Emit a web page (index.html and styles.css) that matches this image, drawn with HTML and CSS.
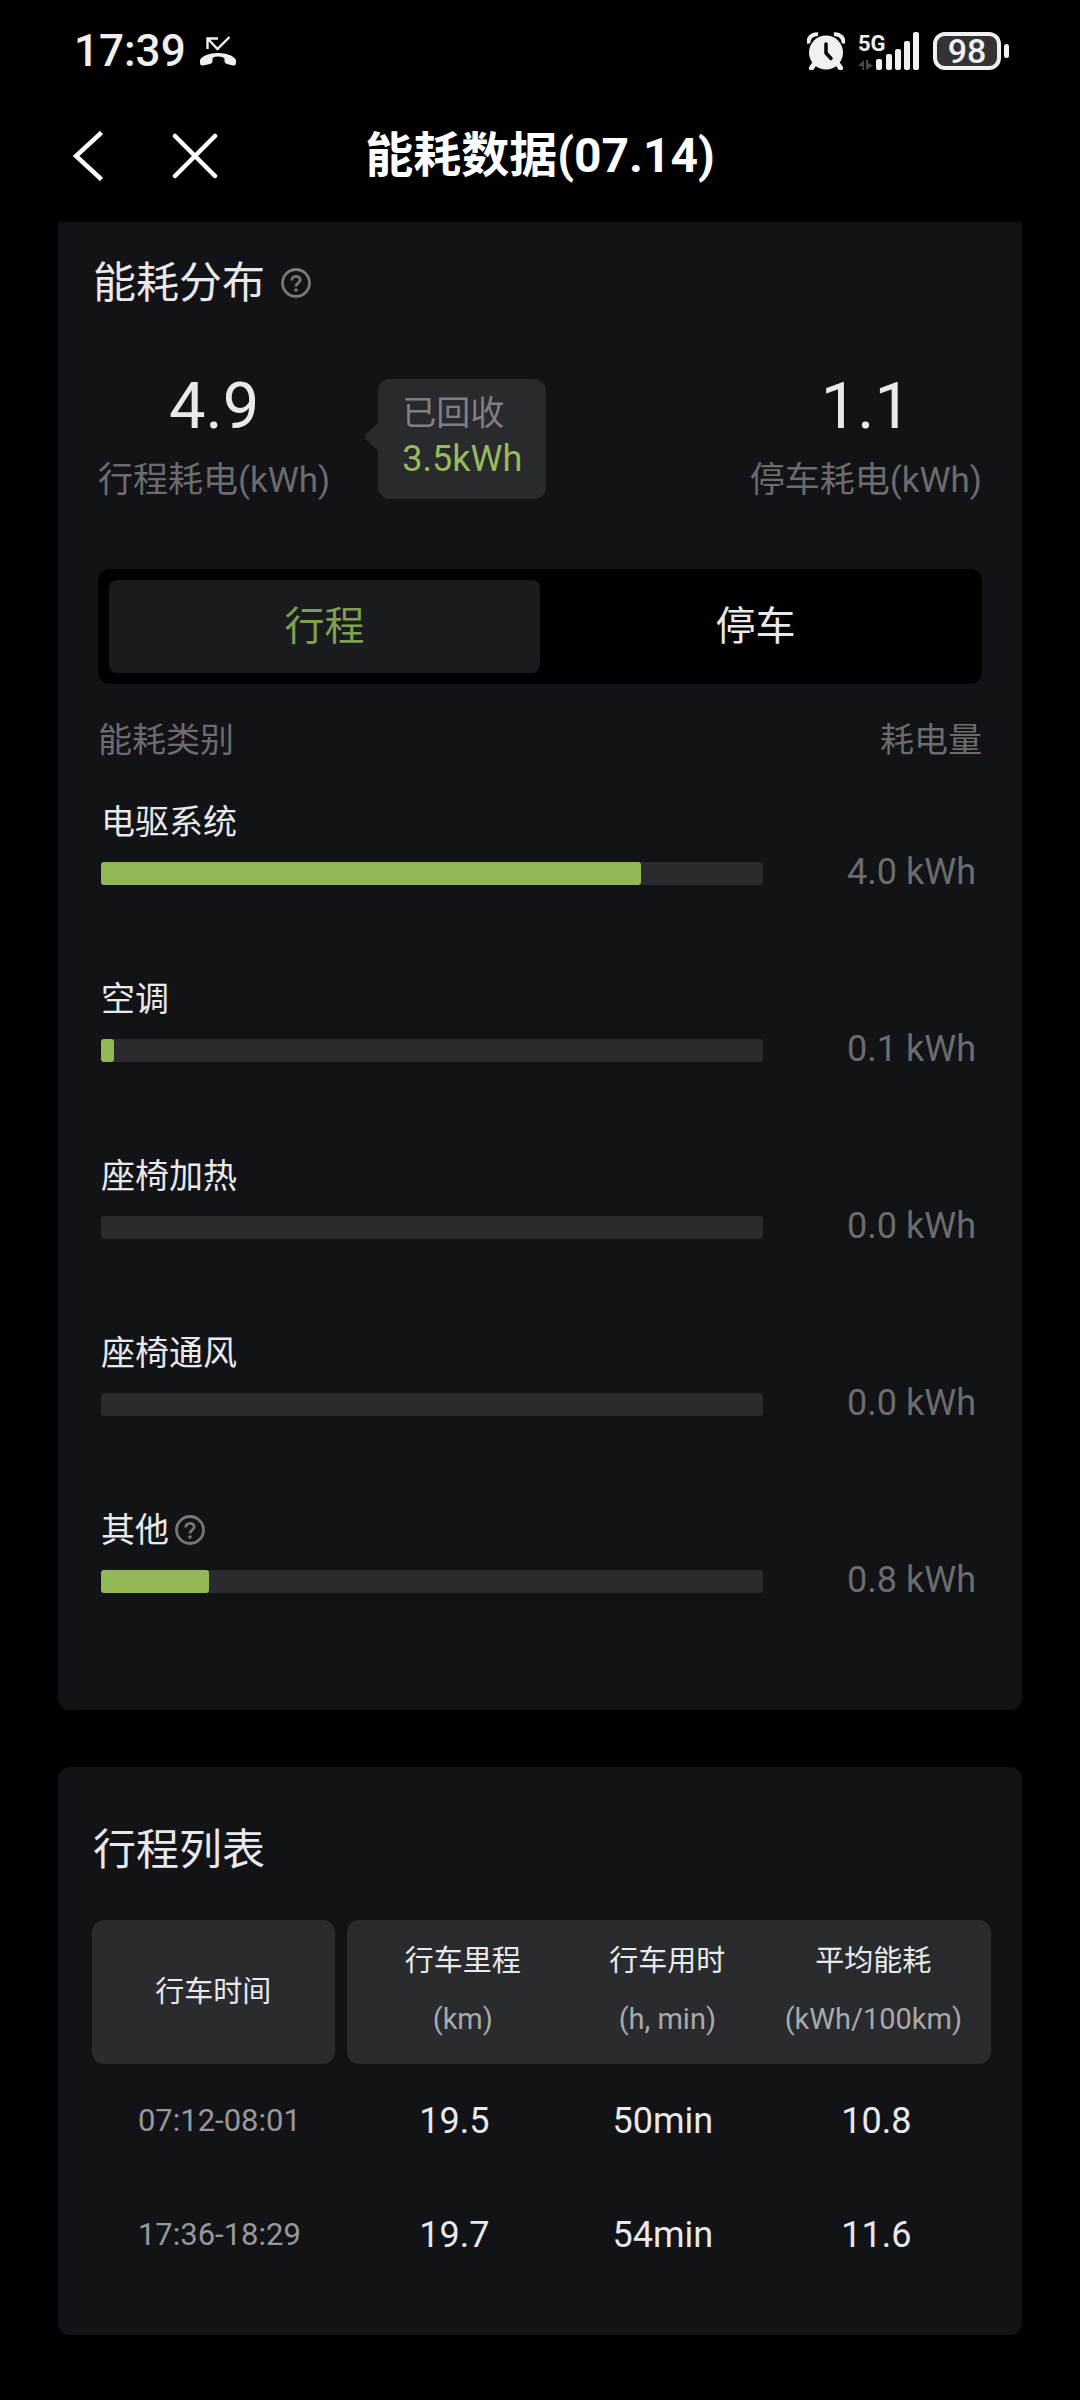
FILE: index.html
```html
<!DOCTYPE html>
<html lang="zh-CN">
<head>
<meta charset="utf-8">
<meta name="viewport" content="width=device-width, initial-scale=1">
<title>能耗数据(07.14)</title>
<link rel="stylesheet" href="styles.css">
</head>
<body>
<div class="status-bar">
  <div class="status-left">
    <span class="clock">17:39</span>
    <svg class="missed-call" width="38" height="32" viewBox="0 0 38 32" aria-hidden="true">
      <path d="M8.500 14V3.500H19M8.500 3.500L18.500 14L30.500 2" fill="none" stroke="currentColor" stroke-width="2.400"/>
      <path d="M1 25C3 21 10 18 19 18S35 21 37 25V28Q37 31 34 30.500L28 29Q25.500 28.500 25.500 26V23.500Q24 21.500 19 21.500T13.500 23.500V26Q13.500 28.500 11 29L4 30.500Q1 31 1 28Z" fill="currentColor"/>
    </svg>
  </div>
  <div class="status-right">
    <svg width="38" height="38" viewBox="0 0 38 38" aria-hidden="true">
      <path d="M1.500 11.500A8 8 0 0 1 11 2.500M27 2.500A8 8 0 0 1 36.500 11.500" fill="none" stroke="currentColor" stroke-width="4"/>
      <path d="M8 31L4.500 36M30 31L33.500 36" stroke="currentColor" stroke-width="5" stroke-linecap="round"/>
      <circle cx="19" cy="20.500" r="17" fill="currentColor"/>
      <path d="M19 12V21L24 26.500" fill="none" stroke="#000" stroke-width="3.500" stroke-linecap="round" stroke-linejoin="round"/>
    </svg>
    <svg class="signal" width="62" height="38" viewBox="0 0 62 38" aria-hidden="true">
      <text class="network" x="0" y="19">5G</text>
      <path d="M0 34L6 28V38H4.500V34ZM8 28V38L15 33.500L10 31V28Z" fill="#4a4a4a"/>
      <g fill="currentColor">
        <rect x="18" y="27" width="6" height="11" rx="2"/>
        <rect x="28" y="22" width="6" height="16" rx="2"/>
        <rect x="37" y="17" width="6" height="21" rx="2"/>
        <rect x="46" y="9" width="6" height="29" rx="2"/>
        <rect x="55" y="0" width="6" height="38" rx="2"/>
      </g>
    </svg>
    <div class="battery"><span class="battery-level">98</span></div>
  </div>
</div>

<header class="nav-bar">
  <div class="nav-actions">
    <button class="nav-button" type="button" aria-label="返回">
      <svg width="32" height="50" viewBox="0 0 32 50"><path d="M29.500 1.500L4 25L29.500 48.500" fill="none" stroke="currentColor" stroke-width="4.500"/></svg>
    </button>
    <button class="nav-button" type="button" aria-label="关闭">
      <svg width="46" height="46" viewBox="0 0 46 46"><path d="M3 3L43 43M43 3L3 43" stroke="currentColor" stroke-width="4.500" stroke-linecap="round"/></svg>
    </button>
  </div>
  <h1 class="nav-title">能耗数据(07.14)</h1>
</header>

<main class="content">
  <section class="card usage">
    <h2 class="card-title">能耗分布
      <button class="help" type="button" aria-label="能耗分布说明">
        <svg width="30" height="30" viewBox="0 0 30 30"><circle cx="15" cy="15" r="13.500" fill="none" stroke="currentColor" stroke-width="2.800"/><path d="M10.800 12.500C10.800 7 19.200 7 19.200 12C19.200 15 15 15 15 18.500" fill="none" stroke="currentColor" stroke-width="2.800"/><circle cx="15" cy="22" r="1.800" fill="currentColor"/></svg>
      </button>
    </h2>

    <div class="stats">
      <div class="stat">
        <span class="stat-value">4.9</span>
        <span class="stat-label">行程耗电(kWh)</span>
      </div>
      <div class="recovered">
        <span class="recovered-label">已回收</span>
        <span class="recovered-value">3.5kWh</span>
      </div>
      <div class="stat stat-end">
        <span class="stat-value">1.1</span>
        <span class="stat-label">停车耗电(kWh)</span>
      </div>
    </div>

    <div class="tabs" role="tablist">
      <button class="tab tab-active" type="button" role="tab" aria-selected="true">行程</button>
      <button class="tab" type="button" role="tab" aria-selected="false">停车</button>
    </div>

    <div class="columns">
      <span>能耗类别</span>
      <span>耗电量</span>
    </div>

    <ul class="categories">
      <li>
        <div class="category-name">电驱系统</div>
        <div class="category-row">
          <div class="track"><div class="fill" style="width:81.6%"></div></div>
          <span class="category-value">4.0 kWh</span>
        </div>
      </li>
      <li>
        <div class="category-name">空调</div>
        <div class="category-row">
          <div class="track"><div class="fill" style="width:2%"></div></div>
          <span class="category-value">0.1 kWh</span>
        </div>
      </li>
      <li>
        <div class="category-name">座椅加热</div>
        <div class="category-row">
          <div class="track"></div>
          <span class="category-value">0.0 kWh</span>
        </div>
      </li>
      <li>
        <div class="category-name">座椅通风</div>
        <div class="category-row">
          <div class="track"></div>
          <span class="category-value">0.0 kWh</span>
        </div>
      </li>
      <li>
        <div class="category-name">其他
          <button class="help" type="button" aria-label="其他说明">
            <svg width="30" height="30" viewBox="0 0 30 30"><circle cx="15" cy="15" r="13.500" fill="none" stroke="currentColor" stroke-width="2.800"/><path d="M10.800 12.500C10.800 7 19.200 7 19.200 12C19.200 15 15 15 15 18.500" fill="none" stroke="currentColor" stroke-width="2.800"/><circle cx="15" cy="22" r="1.800" fill="currentColor"/></svg>
          </button>
        </div>
        <div class="category-row">
          <div class="track"><div class="fill" style="width:16.3%"></div></div>
          <span class="category-value">0.8 kWh</span>
        </div>
      </li>
    </ul>
  </section>

  <section class="card trips">
    <h2 class="card-title">行程列表</h2>
    <table class="trip-table">
      <colgroup><col class="col-time"><col class="col-distance"><col class="col-duration"><col class="col-average"></colgroup>
      <thead>
        <tr>
          <th class="head-time" scope="col">行车时间</th>
          <th class="head-distance" scope="col">行车里程<span class="unit">(km)</span></th>
          <th scope="col">行车用时<span class="unit">(h, min)</span></th>
          <th class="head-average" scope="col">平均能耗<span class="unit">(kWh/100km)</span></th>
        </tr>
      </thead>
      <tbody>
        <tr><td class="trip-time">07:12-08:01</td><td class="trip-distance">19.5</td><td>50min</td><td>10.8</td></tr>
        <tr><td class="trip-time">17:36-18:29</td><td class="trip-distance">19.7</td><td>54min</td><td>11.6</td></tr>
      </tbody>
    </table>
  </section>
</main>
</body>
</html>
```
FILE: styles.css
```css
* {
  box-sizing: border-box;
}

body {
  margin: 0;
  background: #000;
  color: #e9e9eb;
  font-family: Roboto, "Noto Sans CJK SC", sans-serif;
  font-size: 34px;
  line-height: 48px;
}

button {
  padding: 0;
  border: 0;
  background: none;
  color: inherit;
  font: inherit;
}

svg {
  display: block;
}

h1,
h2,
ul {
  margin: 0;
  padding: 0;
}

/* Status bar */
.status-bar {
  display: flex;
  justify-content: space-between;
  align-items: center;
  height: 96px;
  padding: 6px 79px 0 74px;
  color: #f0f0f0;
}

.status-left,
.status-right {
  display: flex;
  align-items: center;
  gap: 13px;
}

.clock {
  font-size: 44px;
  font-weight: 500;
}

.signal {
  overflow: visible;
}

.network {
  fill: currentColor;
  font-size: 22px;
  font-weight: 700;
}

.battery {
  position: relative;
  width: 68px;
  height: 38px;
  border: 4px solid #f0f0f0;
  border-radius: 12px;
  background: #333;
  text-align: center;
}

.battery::after {
  content: "";
  position: absolute;
  top: 8px;
  right: -12px;
  width: 5px;
  height: 14px;
  border-radius: 3px;
  background: #f0f0f0;
}

.battery-level {
  display: block;
  font-size: 34px;
  font-weight: 500;
  line-height: 30px;
}

/* Navigation */
.nav-bar {
  display: grid;
  grid-template-columns: 1fr auto 1fr;
  align-items: center;
  height: 126px;
  padding: 0 72px 7px;
  color: #fff;
}

.nav-actions {
  display: flex;
  align-items: center;
  gap: 68px;
}

.nav-title {
  font-size: 48px;
  font-weight: 700;
  line-height: 72px;
}

/* Cards */
.content {
  display: flex;
  flex-direction: column;
  gap: 57px;
  padding: 0 58px 65px;
}

.card {
  border-radius: 12px;
  background: #121316;
}

.card-title {
  display: flex;
  align-items: center;
  gap: 16px;
  margin-left: 1px;
  font-size: 43px;
  font-weight: 400;
  line-height: 60px;
}

.help {
  color: #77777a;
}

.usage {
  padding: 31px 40px 104px;
  border-radius: 0 0 12px 12px;
}

.usage .card-title {
  margin-left: -5px;
}

/* Totals */
.stats {
  display: flex;
  align-items: flex-start;
  margin-top: 53px;
}

.stat {
  display: flex;
  flex-direction: column;
  align-items: center;
  gap: 11px;
}

.stat-end {
  margin-left: auto;
}

.stat-value {
  font-size: 65px;
  line-height: 80px;
}

.stat-label,
.columns {
  color: #6c6c6f;
}

.stat-label {
  font-size: 35px;
}

.recovered {
  position: relative;
  display: flex;
  flex-direction: column;
  margin: 13px 0 0 48px;
  padding: 11px 24px 17px;
  border-radius: 12px;
  background: #292a2d;
  line-height: 46px;
}

.recovered::before {
  content: "";
  position: absolute;
  top: 44px;
  left: -13px;
  width: 13px;
  height: 28px;
  background: #292a2d;
  clip-path: polygon(100% 0, 0 42%, 0 58%, 100% 100%);
}

.recovered-label {
  color: #808083;
}

.recovered-value {
  color: #97bb5b;
  font-size: 36px;
}

/* Tabs */
.tabs {
  display: flex;
  margin-top: 64px;
  padding: 11px;
  border-radius: 12px;
  background: #000;
}

.tab {
  flex: 1;
  height: 93px;
  border-radius: 8px;
  font-size: 40px;
  line-height: 60px;
}

.tab-active {
  background: #1a1b1e;
  color: #7ea051;
}

/* Categories */
.columns {
  display: flex;
  justify-content: space-between;
  margin-top: 32px;
}

.categories {
  display: flex;
  flex-direction: column;
  gap: 77px;
  margin-top: 34px;
  padding: 0 6px 0 3px;
  list-style: none;
}

.category-name {
  display: flex;
  align-items: center;
  gap: 6px;
}

.category-row {
  display: flex;
  align-items: flex-start;
}

.track {
  flex: 1;
  height: 23px;
  margin-top: 16px;
  border-radius: 3px;
  background: #2a2b2e;
}

.fill {
  height: 100%;
  border-radius: 3px;
  background: #94b856;
}

.category-value {
  width: 213px;
  color: #6c6c6f;
  font-size: 36px;
  line-height: 52px;
  text-align: right;
}

/* Trip list */
.trips {
  padding: 53px 31px 43px 34px;
}

.trip-table {
  width: 100%;
  margin-top: 40px;
  border-spacing: 0;
  table-layout: fixed;
  text-align: center;
}

.col-time {
  width: 27%;
}

.col-distance {
  width: 25.5%;
}

.col-duration {
  width: 23%;
}

.col-average {
  width: 24.5%;
}

.trip-table th {
  height: 144px;
  padding: 12px 0 16px;
  background: #2a2b2e;
  background-clip: padding-box;
  font-size: 29px;
  font-weight: 400;
  line-height: 58px;
}

.trip-table .head-time {
  padding: 0;
  border-radius: 12px;
}

.trip-table .head-distance {
  padding-left: 15px;
  border-left: 12px solid transparent;
  border-radius: 24px 0 0 24px / 12px 0 0 12px;
}

.trip-table .head-average {
  padding-right: 15px;
  border-radius: 0 12px 12px 0;
}

.unit {
  display: block;
  color: #a9a9ab;
}

.trip-table td {
  height: 114px;
  padding: 0 9px 0 0;
  font-size: 36px;
}

.trip-table .trip-distance {
  padding-left: 19px;
}

.trip-table .trip-time {
  padding: 0 0 0 12px;
  color: #98989b;
  font-size: 31px;
}
```
